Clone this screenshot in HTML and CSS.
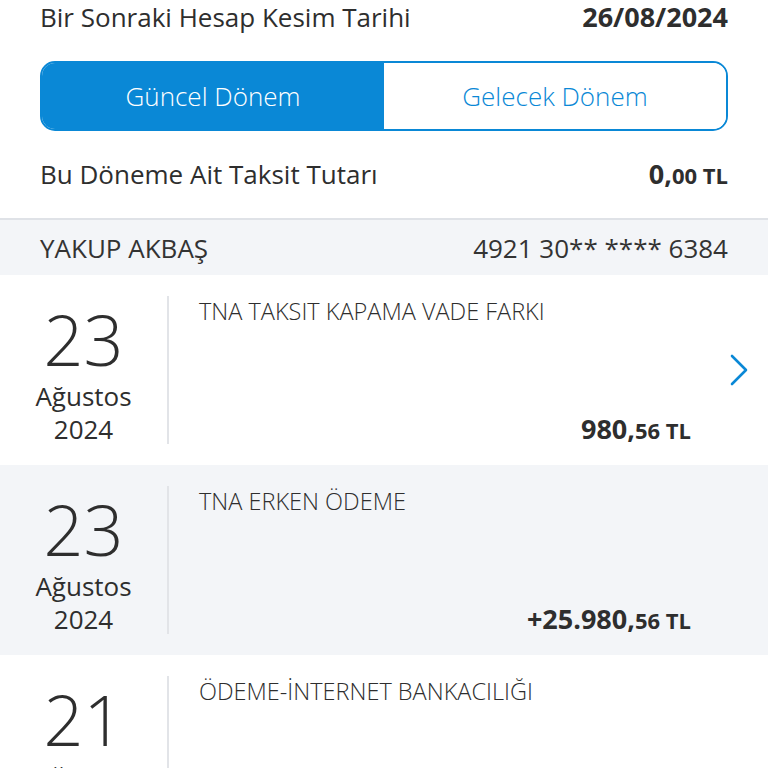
FILE: index.html
```html
<!DOCTYPE html>
<html lang="tr">

<head>
    <meta charset="UTF-8">
    <meta name="viewport" content="width=device-width, initial-scale=1.0">
    <title>Hesap Hareketleri</title>
    <link rel="stylesheet" href="styles.css">
</head>

<body>
    <div class="summary">
        <div class="line">
            <span class="label">Bir Sonraki Hesap Kesim Tarihi</span>
            <span class="cut-date">26/08/2024</span>
        </div>
        <div class="tabs">
            <a class="tab active" href="javascript:;">Güncel Dönem</a>
            <a class="tab" href="javascript:;">Gelecek Dönem</a>
        </div>
        <div class="line line-sum">
            <span class="label">Bu Döneme Ait Taksit Tutarı</span>
            <span class="amount">0,<small>00 TL</small></span>
        </div>
    </div>
    <!-- kart bilgisi -->
    <div class="card-bar">
        <span>YAKUP AKBAŞ</span>
        <span>4921 30** **** 6384</span>
    </div>
    <ul class="tx-list">
        <li class="tx">
            <div class="tx-date">
                <span class="day">23</span>
                <span class="month">Ağustos</span>
                <span class="year">2024</span>
            </div>
            <div class="tx-body">
                <div class="tx-title">TNA TAKSIT KAPAMA VADE FARKI</div>
                <div class="amount">980,<small>56 TL</small></div>
            </div>
            <div class="tx-arrow">
                <svg width="20" height="32" viewBox="0 0 20 32"><path d="M3 2 L17 16 L3 30" fill="none" stroke="#0a88d6" stroke-width="2.6" stroke-linecap="round" stroke-linejoin="round"/></svg>
            </div>
        </li>
        <li class="tx tx-alt">
            <div class="tx-date">
                <span class="day">23</span>
                <span class="month">Ağustos</span>
                <span class="year">2024</span>
            </div>
            <div class="tx-body">
                <div class="tx-title">TNA ERKEN ÖDEME</div>
                <div class="amount">+25.980,<small>56 TL</small></div>
            </div>
            <div class="tx-arrow"></div>
        </li>
        <li class="tx">
            <div class="tx-date">
                <span class="day">21</span>
                <span class="month">Ağustos</span>
                <span class="year">2024</span>
            </div>
            <div class="tx-body">
                <div class="tx-title">ÖDEME-İNTERNET BANKACILIĞI</div>
                <div class="amount">1.000,<small>00 TL</small></div>
            </div>
            <div class="tx-arrow"></div>
        </li>
    </ul>
</body>

</html>
```

FILE: styles.css
```css
* {
    margin: 0;
    padding: 0;
    box-sizing: border-box;
}

body {
    width: 768px;
    height: 768px;
    overflow: hidden;
    background-color: #fff;
    color: #2e2e2e;
    font-family: "Open Sans", "Noto Sans", sans-serif;
    font-weight: 400;
}

a {
    text-decoration: none;
}

ul {
    list-style: none;
}

.summary {
    padding: 0 40px;
}

.line {
    display: flex;
    justify-content: space-between;
    align-items: baseline;
    font-size: 26px;
    line-height: 34px;
}

.cut-date {
    font-weight: 700;
    font-size: 27px;
}

.tabs {
    display: flex;
    height: 70px;
    margin: 27px 0 0;
    border: 2px solid #0a88d6;
    border-radius: 15px;
    overflow: hidden;
}

.tab {
    flex: 1;
    display: flex;
    align-items: center;
    justify-content: center;
    font-size: 26px;
    font-weight: 300;
    color: #0a88d6;
    background-color: #fff;
}

.tab.active {
    color: #fff;
    background-color: #0a88d6;
}

.line-sum {
    padding: 26px 0 26px;
}

.amount {
    font-weight: 700;
    font-size: 27px;
    white-space: nowrap;
}

.amount small {
    font-size: 22px;
}

.card-bar {
    display: flex;
    justify-content: space-between;
    align-items: center;
    height: 57px;
    padding: 0 40px;
    font-size: 26px;
    color: #333;
    background-color: #f3f5f8;
    border-top: 2px solid #dfe2e7;
}

.tx {
    display: flex;
    height: 190px;
    padding: 21px 0 21px;
}

.tx-alt {
    background-color: #f3f5f8;
}

.tx-date {
    width: 167px;
    display: flex;
    flex-direction: column;
    align-items: center;
    padding-top: 2px;
}

.day {
    font-size: 70px;
    font-weight: 300;
    line-height: 82px;
    font-stretch: 95%;
}

.month,
.year {
    font-size: 26px;
    line-height: 33px;
}

.tx-body {
    flex: 1;
    display: flex;
    flex-direction: column;
    justify-content: space-between;
    align-items: flex-end;
    padding-left: 30px;
    border-left: 2px solid #e2e4e8;
}

.tx-title {
    align-self: flex-start;
    font-size: 23.5px;
    font-weight: 300;
    line-height: 30px;
}

.tx-body .amount {
    line-height: 28px;
}

.tx-arrow {
    width: 77px;
    display: flex;
    align-items: center;
    padding-left: 38px;
}
```
